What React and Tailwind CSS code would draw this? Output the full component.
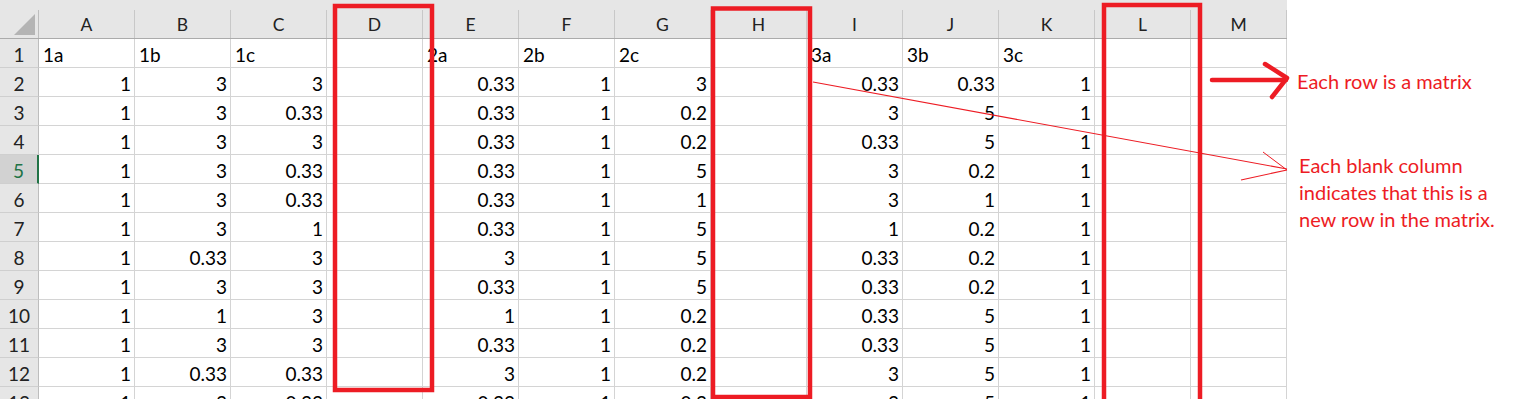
import React from "react";

const cols = ["A", "B", "C", "D", "E", "F", "G", "H", "I", "J", "K", "L", "M"];

const labels = ["1a", "1b", "1c", "", "2a", "2b", "2c", "", "3a", "3b", "3c", "", ""];

const data = [
  ["1", "3", "3", "0.33", "1", "3", "0.33", "0.33", "1"],
  ["1", "3", "0.33", "0.33", "1", "0.2", "3", "5", "1"],
  ["1", "3", "3", "0.33", "1", "0.2", "0.33", "5", "1"],
  ["1", "3", "0.33", "0.33", "1", "5", "3", "0.2", "1"],
  ["1", "3", "0.33", "0.33", "1", "1", "3", "1", "1"],
  ["1", "3", "1", "0.33", "1", "5", "1", "0.2", "1"],
  ["1", "0.33", "3", "3", "1", "5", "0.33", "0.2", "1"],
  ["1", "3", "3", "0.33", "1", "5", "0.33", "0.2", "1"],
  ["1", "1", "3", "1", "1", "0.2", "0.33", "5", "1"],
  ["1", "3", "3", "0.33", "1", "0.2", "0.33", "5", "1"],
  ["1", "0.33", "0.33", "3", "1", "0.2", "3", "5", "1"],
  ["1", "3", "0.33", "0.33", "1", "0.2", "3", "5", "1"],
];

// spread the 9 values over 13 columns, leaving D, H, L, M empty
const toRow = (v) => [v[0], v[1], v[2], "", v[3], v[4], v[5], "", v[6], v[7], v[8], "", ""];

const Cell = ({ children, left }) => (
  <div
    className={`w-[96px] h-[29px] shrink-0 border-r border-b border-[#d4d4d4] flex items-end whitespace-nowrap leading-[24px] ${
      left ? "justify-start pl-[4px]" : "justify-end pr-[3px]"
    }`}
  >
    {children}
  </div>
);

const RowHead = ({ n, active }) => (
  <div
    className={`w-[39px] h-[29px] shrink-0 border-b border-[#cfcfcf] flex items-end justify-center leading-[24px] ${
      active
        ? "bg-[#d2d2d2] text-[#217346] border-r-2 border-r-[#217346]"
        : "bg-[#e6e6e6] text-[#222] border-r border-r-[#bdbdbd]"
    }`}
  >
    {n}
  </div>
);

export default function App() {
  return (
    <div
      className="relative w-[1526px] h-[399px] overflow-hidden bg-white flex text-black"
      style={{ fontFamily: "Lato, 'Open Sans', sans-serif" }}
    >
      {/* Sheet */}
      <div className="w-[1287px] shrink-0 flex flex-col text-[19px]">
        {/* Column headers */}
        <div className="flex h-[39px] shrink-0 bg-[#e6e6e6] border-b border-[#ababab]">
          <div className="w-[39px] shrink-0 flex flex-col">
            <div className="h-[10px]" />
            <div className="flex-1 border-r border-[#bdbdbd] relative">
              <svg width="38" height="28" className="absolute left-0 top-0">
                <polygon points="35,4 35,25 14,25" fill="#b4b4b4" />
              </svg>
            </div>
          </div>
          {cols.map((c) => (
            <div key={c} className="w-[96px] shrink-0 flex flex-col">
              <div className="h-[10px]" />
              <div className="flex-1 border-r border-[#c8c8c8] flex items-center justify-center text-[17.5px] text-[#222] pt-[2px]">
                {c}
              </div>
            </div>
          ))}
        </div>

        {/* Row 1 labels */}
        <div className="flex">
          <RowHead n={1} />
          {labels.map((l, i) => (
            <Cell key={i} left>
              {l}
            </Cell>
          ))}
        </div>

        {data.map((r, ri) => (
          <div key={ri} className="flex">
            <RowHead n={ri + 2} active={ri + 2 === 5} />
            {toRow(r).map((v, i) => (
              <Cell key={i}>{v}</Cell>
            ))}
          </div>
        ))}
      </div>

      {/* Notes */}
      <div className="flex-1 pl-[10px] pt-[68px] text-[#ed1c24] text-[20px] leading-[27px]">
        <p>Each row is a matrix</p>
        <p className="mt-[57px] pl-[2px]">
          Each blank column
          <br />
          indicates that this is a
          <br />
          new row in the matrix.
        </p>
      </div>

      {/* Paint markup over the sheet */}
      <svg className="absolute inset-0 pointer-events-none" width="1526" height="399">
        <g fill="none" stroke="#ed1c24">
          <rect x="335" y="6" width="97" height="384" strokeWidth="4.5" />
          <rect x="713" y="8.5" width="97" height="388.5" strokeWidth="4.5" />
          <rect x="1104" y="5" width="96" height="410" strokeWidth="4.5" />
          <line x1="1212" y1="80" x2="1286" y2="80" strokeWidth="4.5" strokeLinecap="round" />
          <polyline
            points="1265,64 1287,78 1272,97"
            strokeWidth="4.5"
            strokeLinecap="round"
            strokeLinejoin="round"
          />
          <line x1="813" y1="82" x2="1287" y2="169" strokeWidth="1.2" />
          <line x1="1263" y1="152" x2="1287" y2="170" strokeWidth="1" />
          <line x1="1241" y1="180" x2="1287" y2="170" strokeWidth="1.2" />
        </g>
      </svg>
    </div>
  );
}
